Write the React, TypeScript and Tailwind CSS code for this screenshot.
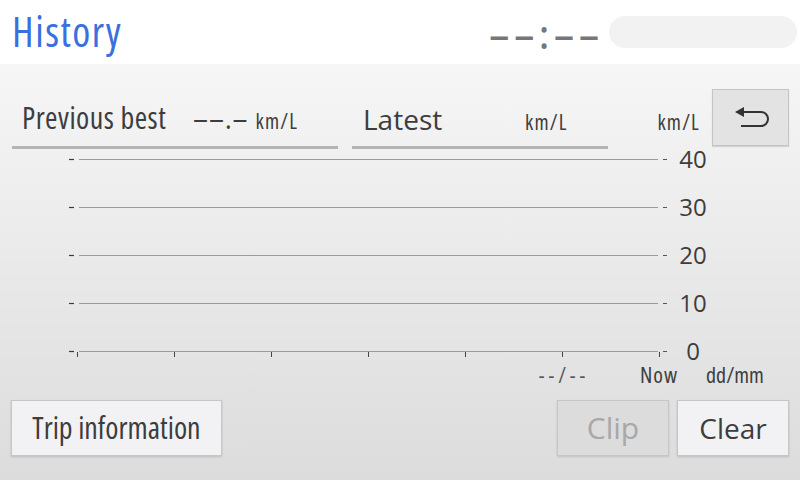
export default function App() {
  const gridY = [10.5, 58.5, 106.5, 154.5, 202.5];
  const ticksX = [17.5, 114.5, 211.5, 308.5, 405.5, 502.5, 599.5];
  return (
    <div className="w-[800px] h-[480px] flex flex-col overflow-hidden font-['Open_Sans',sans-serif] [font-stretch:75%] text-[#3d3d3d]">
      {/* Header */}
      <div className="h-[64px] bg-white flex items-center pl-[12px] pr-[3px]">
        <span className="text-[41px] leading-none text-[#3b6fe0] -mt-[2px] tracking-[1.5px]">History</span>
        <span className="ml-auto mr-[5px] text-[40px] leading-none font-semibold text-[#777777] tracking-[5px] mt-[4px]">––:––</span>
        <div className="w-[188px] h-[32px] rounded-full bg-[#f2f2f2]" />
      </div>

      {/* Body */}
      <div className="flex-1 flex flex-col bg-gradient-to-b from-[#f6f6f6] to-[#dcdcdc]">
        {/* Top row */}
        <div className="h-[85px] flex items-end pl-[12px] pr-[11px]">
          <div className="w-[326px] flex items-baseline pb-[13px] border-b-[3px] border-[#b4b4b4]">
            <span className="w-[181px] pl-[10px] text-[30px] leading-none tracking-[0.5px]">Previous best</span>
            <span className="text-[30px] leading-none tracking-[1px]">––.–</span>
            <span className="ml-[7px] text-[21px] leading-none tracking-[1.2px]">km/L</span>
          </div>
          <div className="ml-[14px] w-[256px] flex items-baseline pb-[13px] border-b-[3px] border-[#b4b4b4]">
            <span className="w-[173px] pl-[11px] text-[28px] leading-none [font-stretch:100%]">Latest</span>
            <span className="text-[21px] leading-none tracking-[1.2px]">km/L</span>
          </div>
          <span className="ml-auto mb-[16px] text-[21px] leading-none tracking-[1.2px]">km/L</span>
          <button className="ml-[12px] mb-[3px] w-[77px] h-[57px] flex items-center justify-center bg-[#e3e3e3] border border-[#c4c4c4] shadow-[0_1px_1px_rgba(0,0,0,0.12)]">
            <svg width="34" height="22" viewBox="0 0 34 22" className="ml-[3px] -mt-[2px]">
              <polygon points="0,6 9,1 9,11" fill="#333333" />
              <path d="M9 6 H26 A7 7 0 0 1 26 20 H6" fill="none" stroke="#333333" strokeWidth="2" />
            </svg>
          </button>
        </div>

        {/* Chart */}
        <div className="flex pl-[60px]">
          <svg width="610" height="211" viewBox="0 0 610 211">
            {gridY.map((y) => (
              <g key={y}>
                <line x1="19" x2="598" y1={y} y2={y} stroke="#9b9b9b" strokeWidth="1" />
                <line x1="9" x2="14" y1={y} y2={y} stroke="#3a3a3a" strokeWidth="1.2" />
                <line x1="603" x2="607" y1={y} y2={y} stroke="#555555" strokeWidth="1" />
              </g>
            ))}
            {ticksX.map((x) => (
              <line key={x} x1={x} x2={x} y1="203" y2="208" stroke="#444444" strokeWidth="1" />
            ))}
          </svg>
          <div className="w-[46px] flex flex-col items-center gap-[28px]">
            {["40", "30", "20", "10", "0"].map((l) => (
              <span key={l} className="text-[24px] leading-[20px] [font-stretch:100%]">
                {l}
              </span>
            ))}
          </div>
        </div>

        {/* X labels */}
        <div className="flex items-baseline pl-[514px] mt-[2px]">
          <span className="w-[96px] text-center text-[21px] leading-none text-[#555555] tracking-[4px] pl-[4px]">--/--</span>
          <span className="w-[98px] text-center text-[22px] leading-none tracking-[1px]">Now</span>
          <span className="-ml-[2px] text-[22px] leading-none">dd/mm</span>
        </div>

        {/* Buttons */}
        <div className="mt-auto mb-[24px] flex px-[11px]">
          <button className="w-[211px] h-[56px] flex items-center justify-center bg-[#f2f2f4] border border-[#c6c6c6] shadow-[0_1px_2px_rgba(0,0,0,0.15)] text-[30px] leading-none text-[#3d3d3d]">
            Trip information
          </button>
          <button className="ml-auto w-[112px] h-[56px] flex items-center justify-center bg-[#dcdcdc] border border-[#c6c6c6] shadow-[0_1px_2px_rgba(0,0,0,0.12)] text-[30px] leading-none text-[#a8a8a8] [font-stretch:100%]">
            Clip
          </button>
          <button className="ml-[8px] w-[112px] h-[56px] flex items-center justify-center bg-[#f2f2f4] border border-[#c6c6c6] shadow-[0_1px_2px_rgba(0,0,0,0.15)] text-[28px] leading-none text-[#3d3d3d] [font-stretch:100%]">
            Clear
          </button>
        </div>
      </div>
    </div>
  );
}
